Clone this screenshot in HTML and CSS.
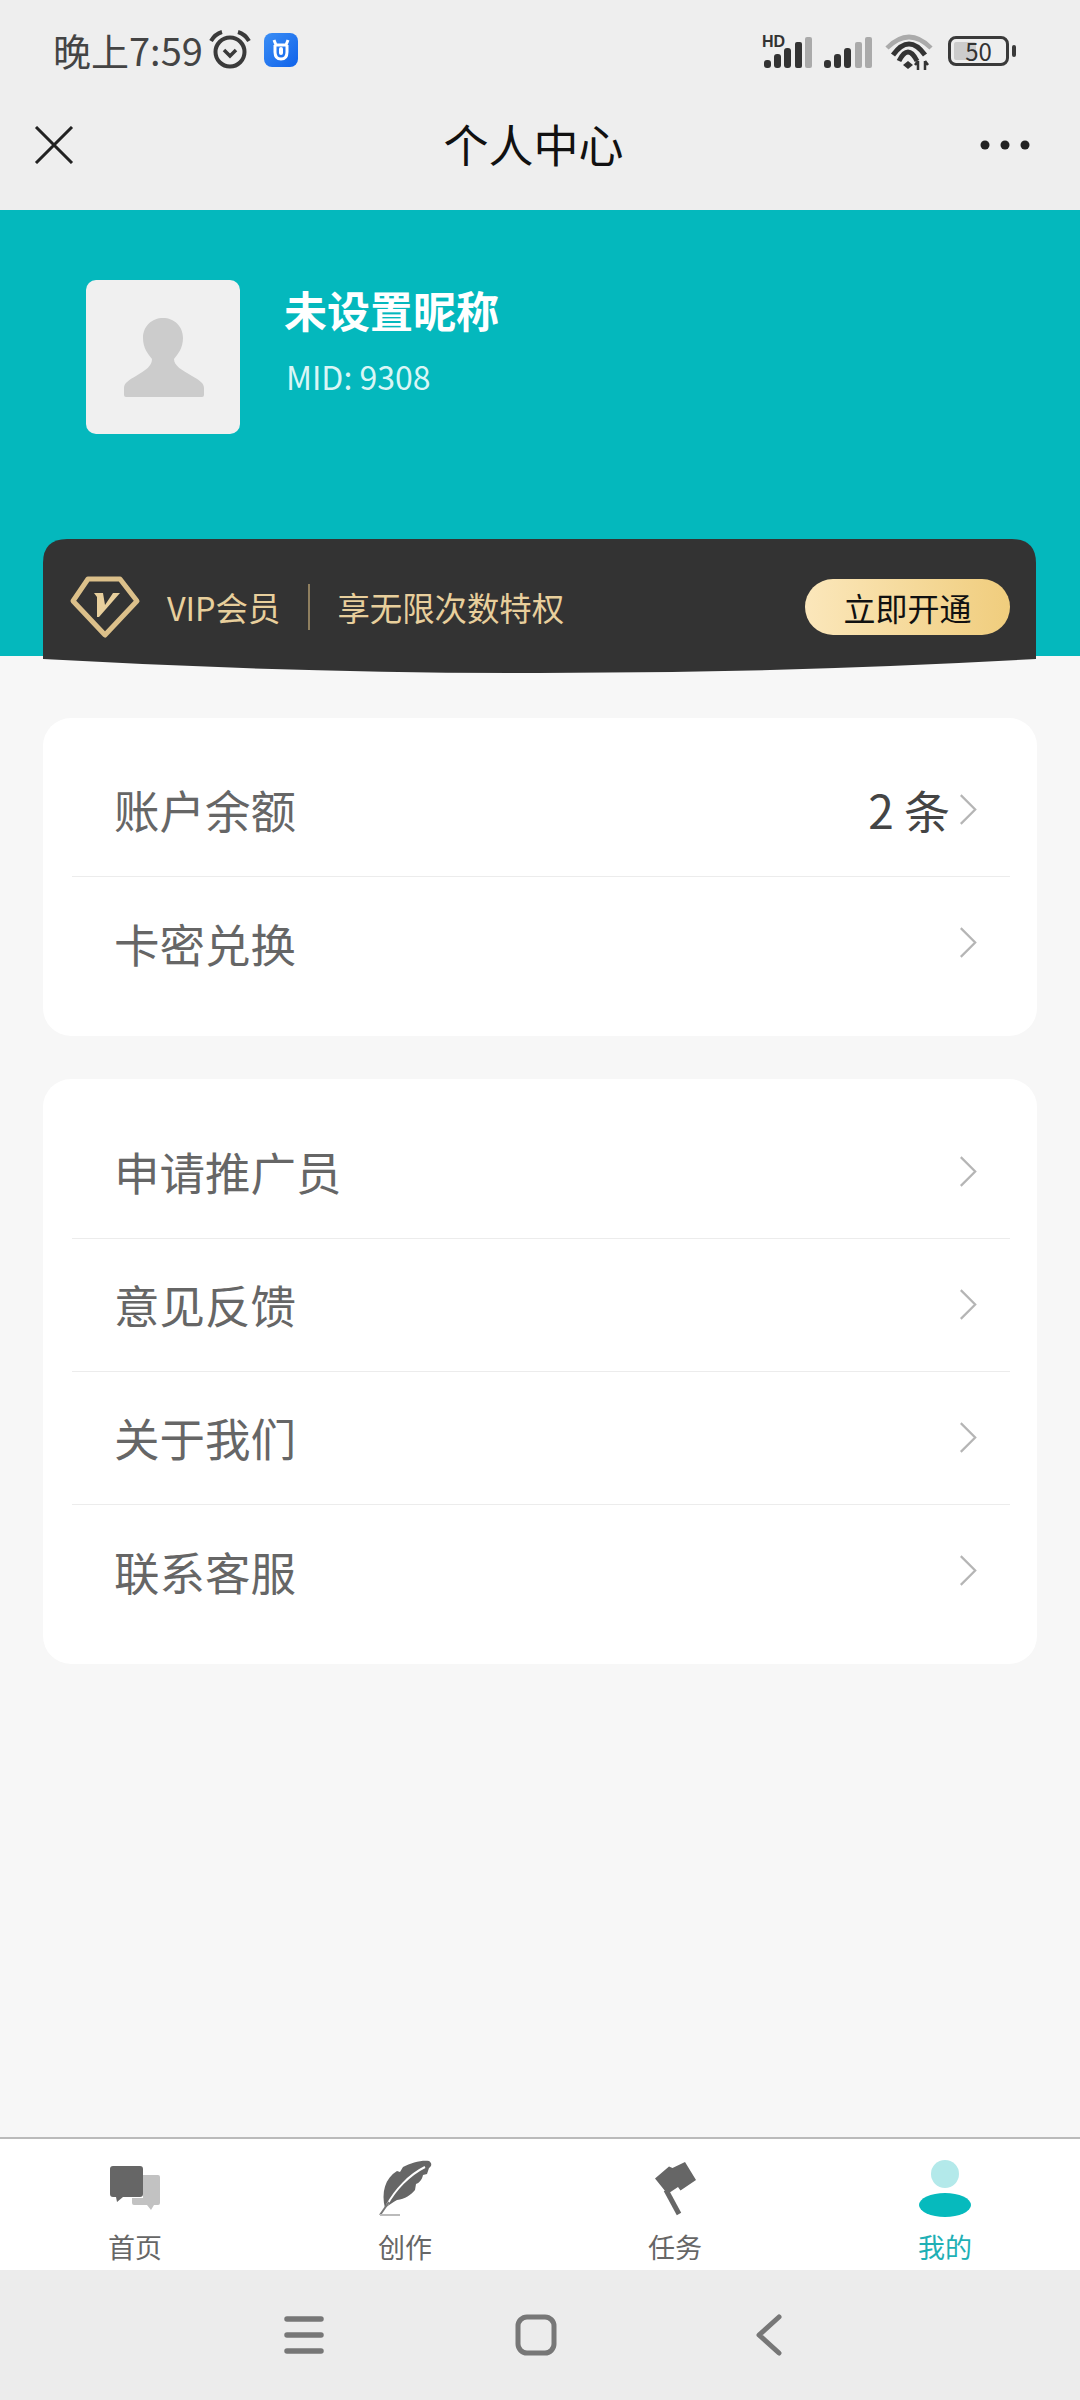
FILE: index.html
```html
<!DOCTYPE html>
<html lang="zh-CN">
<head>
  <meta charset="UTF-8">
  <title>个人中心</title>
  <link rel="stylesheet" href="styles.css">
</head>
<body>

  <svg class="defs" width="0" height="0">
    <symbol id="chev" viewBox="0 0 20 36">
      <polyline points="2,2 18,18 2,34" fill="none" stroke="#b5b5b5" stroke-width="2.5"/>
    </symbol>
    <symbol id="bars" viewBox="0 0 48 31">
      <rect x="0" y="23" width="7" height="8" rx="3" fill="#333"/>
      <rect x="10" y="17" width="7" height="14" rx="3" fill="#333"/>
      <rect x="20" y="11" width="7" height="20" rx="3" fill="#333"/>
      <rect x="31" y="5" width="7" height="26" rx="2" fill="#333"/>
      <rect x="41" y="0" width="7" height="31" rx="2" fill="#aaa"/>
    </symbol>
    <symbol id="bars-weak" viewBox="0 0 48 31">
      <rect x="0" y="23" width="7" height="8" rx="3" fill="#333"/>
      <rect x="10" y="17" width="7" height="14" rx="3" fill="#333"/>
      <rect x="20" y="11" width="7" height="20" rx="3" fill="#333"/>
      <rect x="31" y="5" width="7" height="26" rx="2" fill="#aaa"/>
      <rect x="41" y="0" width="7" height="31" rx="2" fill="#aaa"/>
    </symbol>
  </svg>

  <header class="top">
    <div class="status">
      <div class="status-left">
        <span class="time">晚上7:59</span>
        <svg class="ic-clock" width="42" height="40" viewBox="0 0 42 40">
          <circle cx="21" cy="22" r="14.5" fill="none" stroke="#3a3a3a" stroke-width="4"/>
          <polyline points="15,20 21,26 27,20" fill="none" stroke="#3a3a3a" stroke-width="3.5"/>
          <path d="M2 11 Q6 4 13 2 M40 11 Q36 4 29 2" fill="none" stroke="#3a3a3a" stroke-width="4"/>
        </svg>
        <span class="app-badge">
          <svg width="24" height="24" viewBox="0 0 24 24">
            <path d="M5 2 L7 7 H17 L19 2 M6 7 V14 Q6 21 12 21 Q18 21 18 14 V7" fill="none" stroke="#fff" stroke-width="3"/>
            <rect x="10" y="9" width="4" height="8" rx="2" fill="#fff"/>
          </svg>
        </span>
      </div>
      <div class="status-right">
        <div class="signal">
          <span class="hd">HD</span>
          <svg class="bars" width="48" height="31"><use href="#bars"/></svg>
        </div>
        <svg class="bars" width="48" height="31"><use href="#bars-weak"/></svg>
        <svg class="ic-wifi" width="48" height="36" viewBox="0 0 48 36">
          <path d="M2 14 Q24 -8 46 14" fill="none" stroke="#aaa" stroke-width="4.5"/>
          <path d="M8 21 Q24 -1 40 21" fill="none" stroke="#333" stroke-width="5"/>
          <path d="M14 27 Q23 9 32 27" fill="none" stroke="#333" stroke-width="5"/>
          <path d="M18 31 L23 27 L28 31 L23 35Z" fill="#333"/>
          <path d="M33 36 V27 M40 36 V27 M30 31 L33 27 M40 27 L43 31" fill="none" stroke="#333" stroke-width="2.5"/>
        </svg>
        <div class="battery">
          <span class="battery-level"></span>
          <span class="battery-num">50</span>
        </div>
      </div>
    </div>
    <div class="titlebar">
      <svg width="40" height="38" viewBox="0 0 40 38">
        <path d="M2 1 L38 37 M38 1 L2 37" stroke="#222" stroke-width="3" fill="none"/>
      </svg>
      <h1>个人中心</h1>
      <svg width="50" height="10" viewBox="0 0 50 10">
        <circle cx="5" cy="5" r="4.5" fill="#222"/>
        <circle cx="25" cy="5" r="4.5" fill="#222"/>
        <circle cx="45" cy="5" r="4.5" fill="#222"/>
      </svg>
    </div>
  </header>

  <section class="hero">
    <div class="profile">
      <div class="avatar">
        <svg width="84" height="82" viewBox="0 0 84 82">
          <path d="M41 2 C30 2 21 10 21 22 C21 32 26 38 30 43 C30 50 24 54 14 60 C7 64 2 67 2 72 V79 Q2 81 4 81 H80 Q82 81 82 79 V72 C82 67 77 64 70 60 C60 54 52 50 52 43 C56 38 61 32 61 22 C61 10 52 2 41 2Z" fill="#ccc"/>
        </svg>
      </div>
      <div class="profile-info">
        <div class="nickname">未设置昵称</div>
        <div class="mid">MID: 9308</div>
      </div>
    </div>

    <div class="vip">
      <svg class="vip-logo" width="74" height="68" viewBox="0 0 74 68">
        <path d="M19 7 H51 L68 29 L36 63 L4 29Z" fill="none" stroke="#dcc08a" stroke-width="5" stroke-linejoin="round"/>
        <path d="M25 21 H34 L36 33 L44 21 H51 L30 45 H28 L28 25Z" fill="#e8cf9c"/>
      </svg>
      <span class="vip-name">VIP会员</span>
      <span class="vip-sep"></span>
      <span class="vip-desc">享无限次数特权</span>
      <span class="vip-btn">立即开通</span>
    </div>
  </section>

  <main class="content">
    <div class="card">
      <div class="row">
        <span class="row-label">账户余额</span>
        <span class="row-value">2 条</span>
        <svg class="chev" width="18" height="33"><use href="#chev"/></svg>
      </div>
      <div class="row">
        <span class="row-label">卡密兑换</span>
        <svg class="chev" width="18" height="33"><use href="#chev"/></svg>
      </div>
    </div>

    <div class="card card-long">
      <div class="row">
        <span class="row-label">申请推广员</span>
        <svg class="chev" width="18" height="33"><use href="#chev"/></svg>
      </div>
      <div class="row">
        <span class="row-label">意见反馈</span>
        <svg class="chev" width="18" height="33"><use href="#chev"/></svg>
      </div>
      <div class="row">
        <span class="row-label">关于我们</span>
        <svg class="chev" width="18" height="33"><use href="#chev"/></svg>
      </div>
      <div class="row">
        <span class="row-label">联系客服</span>
        <svg class="chev" width="18" height="33"><use href="#chev"/></svg>
      </div>
    </div>
  </main>

  <nav class="tabbar">
    <div class="tab">
      <svg width="60" height="60" viewBox="0 0 60 60">
        <path d="M38 17 H53 Q55 17 55 19 V45 Q55 47 53 47 H49 L46 52 L42 47 H29 Q27 47 27 45 V40 H38Z" fill="#c2c2c2"/>
        <path d="M8 8 H35 Q38 8 38 11 V36 Q38 39 35 39 H18 L12 44 L11 39 H8 Q5 39 5 36 V11 Q5 8 8 8Z" fill="#666"/>
      </svg>
      <span>首页</span>
    </div>
    <div class="tab">
      <svg width="60" height="60" viewBox="0 0 60 60">
        <path d="M10 50 C6 35 10 20 22 13 L25 14 L28 9 C36 5 46 2 54 3 C57 5 57 8 54 10 L52 16 L48 17 C47 22 44 25 41 26 L40 32 C36 37 30 41 22 42 C18 44 14 47 10 50Z" fill="#666"/>
        <path d="M12 47 C20 32 34 17 50 9" fill="none" stroke="#fff" stroke-width="2"/>
        <path d="M14 44 L5 57" fill="none" stroke="#777" stroke-width="2"/>
        <path d="M5 57 H25" fill="none" stroke="#bbb" stroke-width="2"/>
      </svg>
      <span>创作</span>
    </div>
    <div class="tab">
      <svg width="60" height="60" viewBox="0 0 60 60">
        <path d="M10 20.5 L24 8.5 L27.5 10 L40 4 L51 22 L35.5 32.5 L33 29 L22.5 36Z" fill="#666"/>
        <path d="M21 32 L34 56" fill="none" stroke="#666" stroke-width="5"/>
      </svg>
      <span>任务</span>
    </div>
    <div class="tab tab-active">
      <svg width="60" height="60" viewBox="0 0 60 60">
        <circle cx="30" cy="16" r="14" fill="#b3e9ea"/>
        <ellipse cx="30" cy="47" rx="26" ry="12" fill="#06babd"/>
      </svg>
      <span>我的</span>
    </div>
  </nav>

  <div class="sysnav">
    <svg width="40" height="42" viewBox="0 0 40 42">
      <path d="M3 5 H37 M3 21 H37 M3 37 H37" stroke="#777" stroke-width="5.5" stroke-linecap="round" fill="none"/>
    </svg>
    <svg width="42" height="42" viewBox="0 0 42 42">
      <rect x="3" y="3" width="36" height="36" rx="9" fill="none" stroke="#777" stroke-width="5"/>
    </svg>
    <svg class="sys-back" width="28" height="42" viewBox="0 0 28 42">
      <polyline points="25,3 5,21 25,39" fill="none" stroke="#777" stroke-width="5" stroke-linecap="round" stroke-linejoin="round"/>
    </svg>
  </div>

</body>
</html>
```

FILE: styles.css
```css
* {
  box-sizing: border-box;
}

body {
  font-family: "Noto Sans CJK SC", "Noto Sans", sans-serif;
  background-color: #f7f7f7;
  color: #333;
  margin: 0;
  padding: 0;
  width: 1080px;
  height: 2400px;
  display: flex;
  flex-direction: column;
  overflow: hidden;
}

.defs {
  display: block;
  position: absolute;
}

/* status bar + title */
.top {
  height: 210px;
  background-color: #eee;
  flex-shrink: 0;
}

.status {
  height: 105px;
  padding: 28px 65px 0 53px;
  display: flex;
  justify-content: space-between;
  align-items: flex-start;
}

.status-left {
  display: flex;
  align-items: center;
  height: 44px;
}

.time {
  font-size: 38px;
  line-height: 44px;
  color: #444;
  letter-spacing: 0;
}

.ic-clock {
  margin-left: 6px;
}

.app-badge {
  width: 34px;
  height: 34px;
  margin-left: 13px;
  border-radius: 8px;
  background: linear-gradient(135deg, #3b8ef5, #0f62ea);
  display: flex;
  align-items: center;
  justify-content: center;
}

.status-right {
  display: flex;
  align-items: flex-end;
  gap: 12px;
  height: 42px;
}

.signal {
  position: relative;
}

.bars {
  display: block;
  margin-bottom: 2px;
}

.hd {
  position: absolute;
  left: -2px;
  top: -3px;
  font-size: 16px;
  line-height: 16px;
  font-weight: 700;
  color: #333;
  font-family: "Liberation Sans", sans-serif;
}

.ic-wifi {
  margin-left: 1px;
}

.battery {
  position: relative;
  width: 61px;
  height: 30px;
  margin: 0 6px 4px 3px;
  border: 3px solid #3a3a3a;
  border-radius: 8px;
  display: flex;
  align-items: center;
  justify-content: center;
}

.battery::after {
  content: "";
  position: absolute;
  right: -10px;
  top: 6px;
  width: 4px;
  height: 12px;
  border-radius: 2px;
  background-color: #3a3a3a;
}

.battery-level {
  position: absolute;
  left: 3px;
  top: 3px;
  bottom: 3px;
  width: 22px;
  background-color: #ccc;
  border-radius: 2px;
}

.battery-num {
  position: relative;
  font-size: 24px;
  line-height: 24px;
  color: #333;
}

.titlebar {
  height: 80px;
  padding: 0 50px 0 34px;
  display: flex;
  align-items: center;
  justify-content: space-between;
}

.titlebar h1 {
  margin: 0;
  padding: 0 0 2px 13px;
  font-size: 45px;
  line-height: 60px;
  font-weight: 400;
  color: #111;
}

/* teal part */
.hero {
  height: 446px;
  background-color: #04b8bd;
  padding: 70px 43px 0;
  flex-shrink: 0;
}

.profile {
  height: 154px;
  padding-left: 43px;
  display: flex;
  gap: 44px;
}

.avatar {
  width: 154px;
  height: 154px;
  background-color: #f0f0f0;
  border-radius: 10px;
  padding: 36px 0 0 36px;
}

.avatar svg {
  display: block;
}

.nickname {
  margin-top: 1px;
  font-size: 43px;
  line-height: 56px;
  font-weight: 700;
  color: #fff;
}

.mid {
  margin-top: 19px;
  margin-left: 2px;
  font-size: 32px;
  line-height: 40px;
  color: #d9f6f6;
}

.vip {
  width: 993px;
  height: 134px;
  margin-top: 105px;
  padding: 2px 26px 0;
  background-color: #333;
  clip-path: path("M0 24 Q0 0 24 0 H969 Q993 0 993 24 V120 Q496 148 0 120 Z");
  display: flex;
  align-items: center;
  color: #e8cf9c;
  font-size: 32.4px;
  line-height: 44px;
}

.vip-logo {
  flex-shrink: 0;
  margin-bottom: 2px;
}

.vip-name {
  margin-left: 24px;
}

.vip-sep {
  width: 2px;
  height: 46px;
  margin: 0 27px 0 28px;
  background-color: #8f7f5f;
}

.vip-btn {
  margin-left: auto;
  width: 205px;
  height: 56px;
  border-radius: 28px;
  background: linear-gradient(90deg, #fbe7bb, #f0cd7d);
  color: #111;
  font-size: 32px;
  line-height: 56px;
  text-align: center;
}

/* menu cards */
.content {
  flex: 1;
  padding: 62px 43px 0;
  display: flex;
  flex-direction: column;
  gap: 43px;
}

.card {
  width: 994px;
  background-color: #fff;
  border-radius: 28px;
  padding: 26px 0;
}

.card-long {
  padding: 27px 0 26px;
}

.row {
  height: 133px;
  margin: 0 27px 0 29px;
  padding: 0 33px 2px 43px;
  border-bottom: 1px solid #ececec;
  display: flex;
  align-items: center;
}

.row:last-child {
  border-bottom: none;
}

.row-label {
  flex: 1;
  margin-left: -1px;
  font-size: 45.5px;
  line-height: 60px;
  color: #666;
}

.row-value {
  font-size: 46px;
  line-height: 60px;
  color: #444;
  margin-right: 9px;
}

/* bottom tabs */
.tabbar {
  height: 133px;
  flex-shrink: 0;
  background-color: #fff;
  border-top: 2px solid #bbb;
  padding-top: 19px;
  display: grid;
  grid-template-columns: repeat(4, 270px);
}

.tab {
  display: flex;
  flex-direction: column;
  align-items: center;
  font-size: 27px;
  line-height: 36px;
  color: #666;
}

.tab svg {
  display: block;
  margin-bottom: 11px;
}

.tab-active {
  color: #1eb0b5;
}

/* android nav */
.sysnav {
  height: 130px;
  flex-shrink: 0;
  background-color: #ececec;
  padding: 44px 0 0 284px;
  display: flex;
  align-items: flex-start;
  gap: 191px;
}

.sys-back {
  margin-left: 6px;
}
```
